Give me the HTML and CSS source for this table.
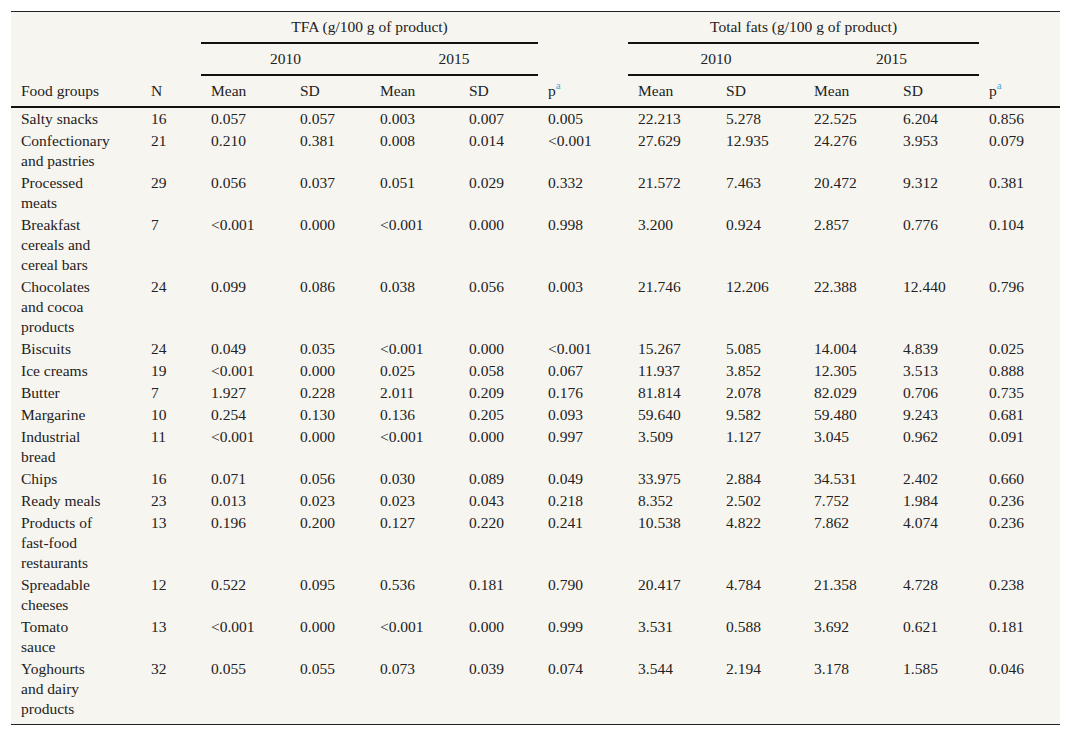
FILE: index.html
```html
<!DOCTYPE html>
<html lang="en">
<head>
<meta charset="utf-8">
<title>TFA and total fats by food group</title>
<link rel="stylesheet" href="styles.css">
</head>
<body>
<div class="wrap">
<table class="data">
<colgroup>
<col class="c-food"><col class="c-n">
<col class="c-m1"><col class="c-s1"><col class="c-m2"><col class="c-s2"><col class="c-p1">
<col class="c-m3"><col class="c-s3"><col class="c-m4"><col class="c-s4"><col class="c-p2">
</colgroup>
<thead>
<tr>
<th rowspan="3" class="bot">Food groups</th>
<th rowspan="3" class="bot">N</th>
<th colspan="4" class="grp">TFA (g/100 g of product)</th>
<th rowspan="3" class="bot">p<sup>a</sup></th>
<th colspan="4" class="grp">Total fats (g/100 g of product)</th>
<th rowspan="3" class="bot">p<sup>a</sup></th>
</tr>
<tr>
<th colspan="2" class="grp">2010</th>
<th colspan="2" class="grp">2015</th>
<th colspan="2" class="grp">2010</th>
<th colspan="2" class="grp">2015</th>
</tr>
<tr>
<th class="bot">Mean</th><th class="bot">SD</th><th class="bot">Mean</th><th class="bot">SD</th>
<th class="bot">Mean</th><th class="bot">SD</th><th class="bot">Mean</th><th class="bot">SD</th>
</tr>
</thead>
<tbody>
<tr><td>Salty snacks</td><td>16</td><td>0.057</td><td>0.057</td><td>0.003</td><td>0.007</td><td>0.005</td><td>22.213</td><td>5.278</td><td>22.525</td><td>6.204</td><td>0.856</td></tr>
<tr><td>Confectionary and pastries</td><td>21</td><td>0.210</td><td>0.381</td><td>0.008</td><td>0.014</td><td>&lt;0.001</td><td>27.629</td><td>12.935</td><td>24.276</td><td>3.953</td><td>0.079</td></tr>
<tr><td>Processed meats</td><td>29</td><td>0.056</td><td>0.037</td><td>0.051</td><td>0.029</td><td>0.332</td><td>21.572</td><td>7.463</td><td>20.472</td><td>9.312</td><td>0.381</td></tr>
<tr><td>Breakfast cereals and cereal bars</td><td>7</td><td>&lt;0.001</td><td>0.000</td><td>&lt;0.001</td><td>0.000</td><td>0.998</td><td>3.200</td><td>0.924</td><td>2.857</td><td>0.776</td><td>0.104</td></tr>
<tr><td>Chocolates and cocoa products</td><td>24</td><td>0.099</td><td>0.086</td><td>0.038</td><td>0.056</td><td>0.003</td><td>21.746</td><td>12.206</td><td>22.388</td><td>12.440</td><td>0.796</td></tr>
<tr><td>Biscuits</td><td>24</td><td>0.049</td><td>0.035</td><td>&lt;0.001</td><td>0.000</td><td>&lt;0.001</td><td>15.267</td><td>5.085</td><td>14.004</td><td>4.839</td><td>0.025</td></tr>
<tr><td>Ice creams</td><td>19</td><td>&lt;0.001</td><td>0.000</td><td>0.025</td><td>0.058</td><td>0.067</td><td>11.937</td><td>3.852</td><td>12.305</td><td>3.513</td><td>0.888</td></tr>
<tr><td>Butter</td><td>7</td><td>1.927</td><td>0.228</td><td>2.011</td><td>0.209</td><td>0.176</td><td>81.814</td><td>2.078</td><td>82.029</td><td>0.706</td><td>0.735</td></tr>
<tr><td>Margarine</td><td>10</td><td>0.254</td><td>0.130</td><td>0.136</td><td>0.205</td><td>0.093</td><td>59.640</td><td>9.582</td><td>59.480</td><td>9.243</td><td>0.681</td></tr>
<tr><td>Industrial bread</td><td>11</td><td>&lt;0.001</td><td>0.000</td><td>&lt;0.001</td><td>0.000</td><td>0.997</td><td>3.509</td><td>1.127</td><td>3.045</td><td>0.962</td><td>0.091</td></tr>
<tr><td>Chips</td><td>16</td><td>0.071</td><td>0.056</td><td>0.030</td><td>0.089</td><td>0.049</td><td>33.975</td><td>2.884</td><td>34.531</td><td>2.402</td><td>0.660</td></tr>
<tr><td>Ready meals</td><td>23</td><td>0.013</td><td>0.023</td><td>0.023</td><td>0.043</td><td>0.218</td><td>8.352</td><td>2.502</td><td>7.752</td><td>1.984</td><td>0.236</td></tr>
<tr><td>Products of fast-food restaurants</td><td>13</td><td>0.196</td><td>0.200</td><td>0.127</td><td>0.220</td><td>0.241</td><td>10.538</td><td>4.822</td><td>7.862</td><td>4.074</td><td>0.236</td></tr>
<tr><td>Spreadable cheeses</td><td>12</td><td>0.522</td><td>0.095</td><td>0.536</td><td>0.181</td><td>0.790</td><td>20.417</td><td>4.784</td><td>21.358</td><td>4.728</td><td>0.238</td></tr>
<tr><td>Tomato sauce</td><td>13</td><td>&lt;0.001</td><td>0.000</td><td>&lt;0.001</td><td>0.000</td><td>0.999</td><td>3.531</td><td>0.588</td><td>3.692</td><td>0.621</td><td>0.181</td></tr>
<tr class="last"><td>Yoghourts and dairy products</td><td>32</td><td>0.055</td><td>0.055</td><td>0.073</td><td>0.039</td><td>0.074</td><td>3.544</td><td>2.194</td><td>3.178</td><td>1.585</td><td>0.046</td></tr>
</tbody>
</table>
</div>
</body>
</html>
```
FILE: styles.css
```css
html, body {
  margin: 0;
  padding: 0;
  background: #ffffff;
}
.wrap {
  padding: 11px;
}
.data {
  width: 1049px;
  table-layout: fixed;
  border-collapse: separate;
  border-spacing: 0;
  background: #f7f5f0;
  border-top: 1px solid #222;
  border-bottom: 1px solid #222;
  font-family: "Liberation Serif", "Times New Roman", serif;
  font-size: 15.5px;
  line-height: 20px;
  color: #222222;
}
.c-food { width: 130px; }
.c-n { width: 60px; }
.c-m1 { width: 89px; }
.c-s1 { width: 80px; }
.c-m2 { width: 89px; }
.c-s2 { width: 79px; }
.c-p1 { width: 90px; }
.c-m3 { width: 88px; }
.c-s3 { width: 88px; }
.c-m4 { width: 89px; }
.c-s4 { width: 86px; }
.c-p2 { width: 81px; }
.data th {
  font-weight: normal;
  text-align: left;
  padding: 5px 10px;
  vertical-align: bottom;
}
.data th.grp {
  text-align: center;
  border-bottom: 2px solid #111;
}
.data th.bot {
  border-bottom: 2px solid #111;
}
.data td {
  padding: 1px 10px;
  vertical-align: top;
  text-align: left;
}
.data td:first-child {
  padding-right: 37px;
}
.data tr.last td {
  padding-bottom: 5px;
}
.data sup {
  color: #4ea8dc;
  font-size: 11px;
  line-height: 0;
  vertical-align: 7px;
}
```
